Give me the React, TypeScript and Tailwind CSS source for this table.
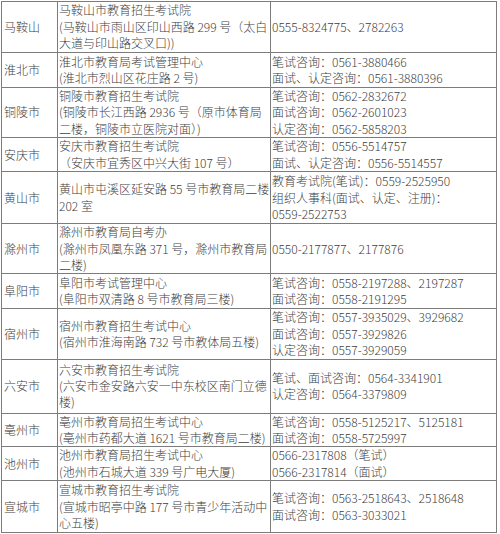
const rows = [
  {
    city: "马鞍山",
    h: "h-[51px]",
    addr: ["马鞍山市教育招生考试院", "(马鞍山市雨山区印山西路 299 号（太白", "大道与印山路交叉口))"],
    tel: ["0555-8324775、2782263"],
  },
  {
    city: "淮北市",
    h: "h-[35px]",
    addr: ["淮北市教育局考试管理中心", "(淮北市烈山区花庄路 2 号)"],
    tel: ["笔试咨询：0561-3880466", "面试、认定咨询：0561-3880396"],
  },
  {
    city: "铜陵市",
    h: "h-[50px]",
    addr: ["铜陵市教育招生考试院", "(铜陵市长江西路 2936 号（原市体育局", "二楼，铜陵市立医院对面）)"],
    tel: ["笔试咨询：0562-2832672", "面试咨询：0562-2601023", "认定咨询：0562-5858203"],
  },
  {
    city: "安庆市",
    h: "h-[34px]",
    addr: ["安庆市教育招生考试院", "（安庆市宜秀区中兴大街 107 号）"],
    tel: ["笔试咨询：0556-5514757", "面试、认定咨询：0556-5514557"],
  },
  {
    city: "黄山市",
    h: "h-[52px]",
    addr: ["黄山市屯溪区延安路 55 号市教育局二楼", "202 室"],
    tel: ["教育考试院(笔试)：0559-2525950", "组织人事科(面试、认定、注册)：", "0559-2522753"],
  },
  {
    city: "滁州市",
    h: "h-[50px]",
    addr: ["滁州市教育局自考办", "(滁州市凤凰东路 371 号，滁州市教育局", "二楼)"],
    tel: ["0550-2177877、2177876"],
  },
  {
    city: "阜阳市",
    h: "h-[35px]",
    addr: ["阜阳市考试管理中心", "(阜阳市双清路 8 号市教育局三楼)"],
    tel: ["笔试咨询：0558-2197288、2197287", "面试咨询：0558-2191295"],
  },
  {
    city: "宿州市",
    h: "h-[50px]",
    addr: ["宿州市教育招生考试中心", "(宿州市淮海南路 732 号市教体局五楼)"],
    tel: ["笔试咨询：0557-3935029、3929682", "面试咨询：0557-3929826", "认定咨询：0557-3929059"],
  },
  {
    city: "六安市",
    h: "h-[54px]",
    addr: ["六安市教育招生考试院", "(六安市金安路六安一中东校区南门立德", "楼)"],
    tel: ["笔试、面试咨询：0564-3341901", "认定咨询：0564-3379809"],
  },
  {
    city: "亳州市",
    h: "h-[33px]",
    addr: ["亳州市教育局招生考试中心", "(亳州市药都大道 1621 号市教育局二楼)"],
    tel: ["笔试咨询：0558-5125217、5125181", "面试咨询：0558-5725997"],
  },
  {
    city: "池州市",
    h: "h-[33px]",
    addr: ["池州市教育局招生考试中心", "(池州市石城大道 339 号广电大厦)"],
    tel: ["0566-2317808（笔试）", "0566-2317814（面试）"],
  },
  {
    city: "宣城市",
    h: "h-[52px]",
    addr: ["宣城市教育招生考试院", "(宣城市昭亭中路 177 号市青少年活动中", "心五楼)"],
    tel: ["笔试咨询：0563-2518643、2518648", "面试咨询：0563-3033021"],
  },
];

function Lines({ items }: { items: string[] }) {
  return (
    <>
      {items.map((t, i) => (
        <div key={i} className="whitespace-nowrap">
          {t}
        </div>
      ))}
    </>
  );
}

export default function App() {
  return (
    <div className="min-h-screen bg-white pl-px pt-px font-['Noto_Sans_CJK_SC',sans-serif] text-[12px] leading-[16.4px] font-light text-[#404040]">
      <table className="w-[495px] table-fixed border-collapse">
        <colgroup>
          <col className="w-[56px]" />
          <col className="w-[213px]" />
          <col className="w-[226px]" />
        </colgroup>
        <tbody>
          {rows.map((r) => (
            <tr key={r.city} className={r.h}>
              <td className="border border-[#7c7c7c] p-0 pl-[2px] align-middle whitespace-nowrap">{r.city}</td>
              <td className="border border-[#7c7c7c] p-0 pl-px align-middle">
                <Lines items={r.addr} />
              </td>
              <td className="border border-[#7c7c7c] p-0 pl-px align-middle">
                <Lines items={r.tel} />
              </td>
            </tr>
          ))}
        </tbody>
      </table>
    </div>
  );
}
